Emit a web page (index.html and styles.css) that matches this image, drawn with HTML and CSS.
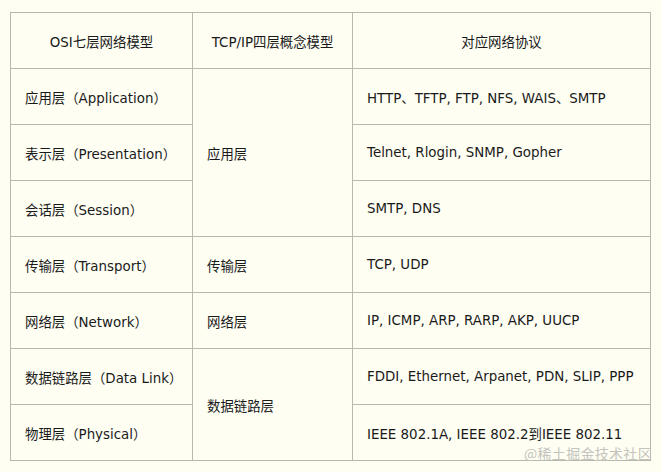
FILE: index.html
```html
<!DOCTYPE html>
<html lang="zh">
<head>
<meta charset="utf-8">
<link rel="stylesheet" href="styles.css">
</head>
<body>
<div class="wrap">
<table class="osi">
  <colgroup>
    <col class="c1"><col class="c2"><col class="c3">
  </colgroup>
  <thead>
    <tr><th>OSI七层网络模型</th><th>TCP/IP四层概念模型</th><th>对应网络协议</th></tr>
  </thead>
  <tbody>
    <tr><td>应用层（Application）</td><td rowspan="3">应用层</td><td>HTTP、TFTP, FTP, NFS, WAIS、SMTP</td></tr>
    <tr><td>表示层（Presentation）</td><td>Telnet, Rlogin, SNMP, Gopher</td></tr>
    <tr><td>会话层（Session）</td><td>SMTP, DNS</td></tr>
    <tr><td>传输层（Transport）</td><td>传输层</td><td>TCP, UDP</td></tr>
    <tr><td>网络层（Network）</td><td>网络层</td><td>IP, ICMP, ARP, RARP, AKP, UUCP</td></tr>
    <tr><td>数据链路层（Data Link）</td><td rowspan="2">数据链路层</td><td>FDDI, Ethernet, Arpanet, PDN, SLIP, PPP</td></tr>
    <tr><td>物理层（Physical）</td><td>IEEE 802.1A, IEEE 802.2到IEEE 802.11</td></tr>
  </tbody>
</table>
<div class="mark">@稀土掘金技术社区</div>
</div>
</body>
</html>
```
FILE: styles.css
```css
html, body {
  margin: 0;
  padding: 0;
  background: #fefef3;
}
body {
  width: 662px;
  height: 472px;
  overflow: hidden;
}
.wrap {
  position: relative;
  padding: 12px 0 0 10px;
}
.osi {
  border-collapse: collapse;
  table-layout: fixed;
  width: 640px;
  font-family: "DejaVu Sans", Verdana, "Noto Sans CJK SC", sans-serif;
  font-size: 13.4px;
  color: #1a1a1a;
}
.c1 { width: 182px; }
.c2 { width: 160px; }
.c3 { width: 298px; }
.osi th, .osi td {
  border: 1px solid #b8b8ae;
  height: 55px;
  padding: 0 0 0 14px;
  vertical-align: middle;
  text-align: left;
  font-weight: normal;
  white-space: nowrap;
}
.osi th {
  text-align: center;
  padding: 0;
}
.mark {
  position: absolute;
  left: 524px;
  top: 443px;
  font-family: "Noto Sans CJK SC", sans-serif;
  font-size: 14px;
  color: #c4c4bc;
  letter-spacing: 0.3px;
}
```
